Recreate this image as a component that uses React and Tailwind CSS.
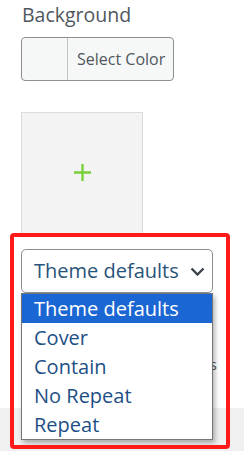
export default function App() {
  const items = ["Theme defaults", "Cover", "Contain", "No Repeat", "Repeat"];
  return (
    <div className="relative w-[244px] h-[451px] bg-white overflow-hidden font-['Open_Sans',sans-serif]">
      <div className="pl-[22px] pt-[1px] text-[19.5px] leading-[27px] text-[#50575e]">Background</div>
      <div className="ml-[21px] mt-[9px] flex w-[153px] h-[44px] border border-[#8c8f94] rounded-[4px] bg-[#f6f7f7] overflow-hidden">
        <div className="w-[46px] shrink-0 border-r border-[#c3c4c7]" />
        <div className="flex items-center pl-[9px] text-[16px] text-[#50575e] whitespace-nowrap">Select Color</div>
      </div>
      <div className="ml-[21px] mt-[31px] w-[122px] h-[122px] bg-[#f3f3f3] border border-[#dcdcde] flex items-center justify-center">
        <svg width="19" height="19" viewBox="0 0 19 19" className="mt-[-2px]">
          <path d="M9.5 1v17M1 9.5h17" stroke="#7ad03a" strokeWidth="2.4" fill="none" />
        </svg>
      </div>
      <div className="ml-[21px] mt-[15px] w-[192px] h-[44px] border border-[#8c8f94] rounded-[5px] bg-white flex items-center justify-between pl-[12px] pr-[7px] text-[20px] text-[#285479] whitespace-nowrap">
        <span>Theme defaults</span>
        <svg width="15" height="9" viewBox="0 0 15 9">
          <path d="M1.5 1.5l6 6 6-6" stroke="#3c434a" strokeWidth="2.4" fill="none" />
        </svg>
      </div>
      <div className="ml-[21px] mt-[61px] w-[196px] flex justify-end text-[15px] leading-[20px] text-[#50575e]">
        <span>Options</span>
      </div>
      <div className="mt-[34px] h-[43px] bg-[#f0f0f1]" />

      <div className="absolute left-[21px] top-[293px] w-[192px] bg-white border border-[#767676] shadow-[2px_3px_5px_rgba(0,0,0,0.3)]">
        {items.map((t, i) => (
          <div
            key={t}
            className={
              i === 0
                ? "h-[29px] flex items-center pl-[12px] text-[20px] bg-[#1a66d2] text-white whitespace-nowrap"
                : "h-[29px] flex items-center pl-[12px] text-[20px] text-[#1d4f85] whitespace-nowrap"
            }
          >
            {t}
          </div>
        ))}
      </div>

      <div className="absolute left-[10px] top-[233px] w-[220px] h-[216px] border-[4px] border-[#ff1a1a] rounded-[4px]" />
    </div>
  );
}
